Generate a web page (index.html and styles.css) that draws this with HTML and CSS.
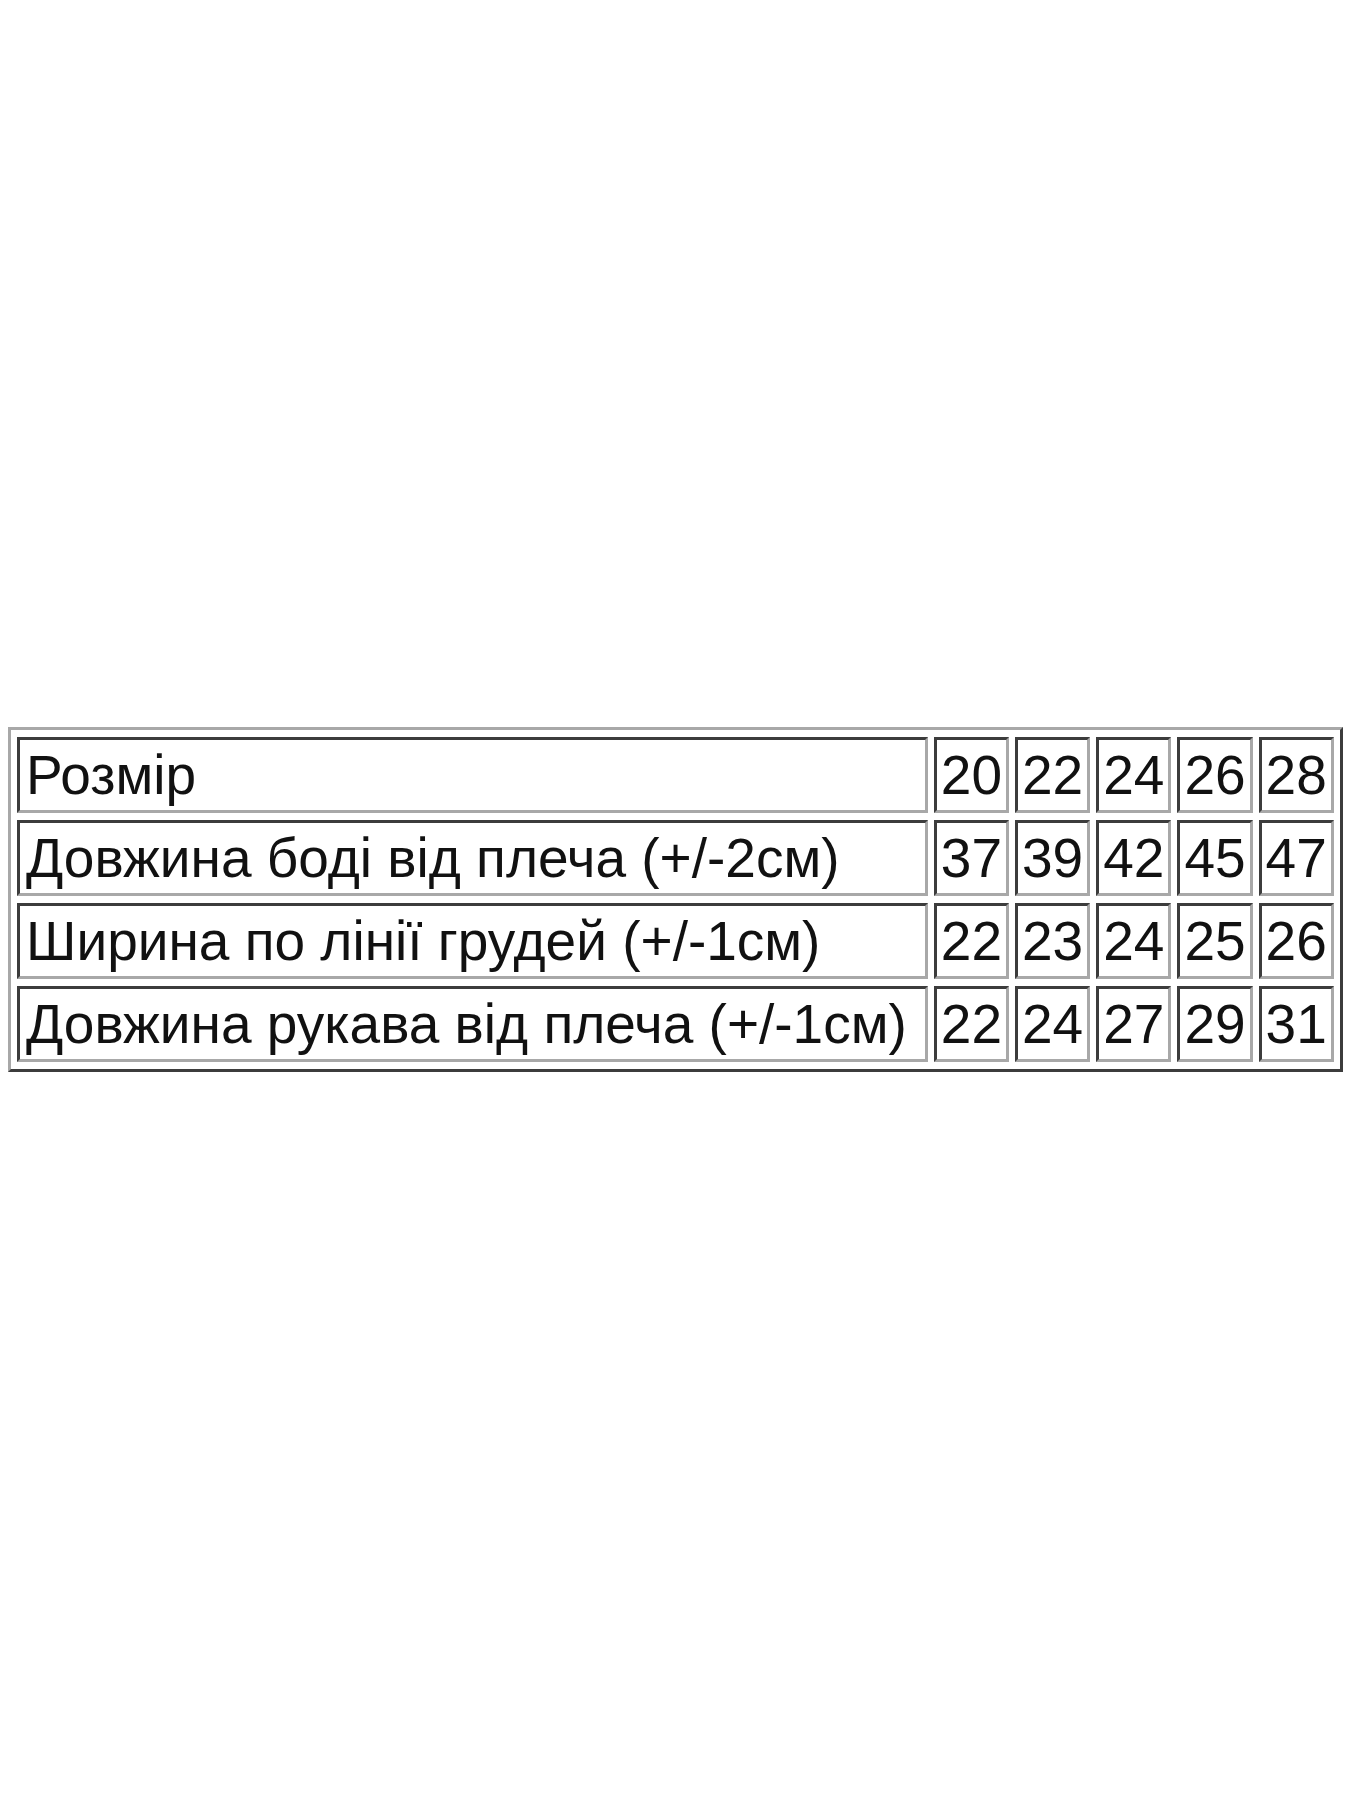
FILE: index.html
```html
<!DOCTYPE html>
<html lang="uk">
<head>
<meta charset="utf-8">
<title>Розмір</title>
<link rel="stylesheet" href="styles.css">
</head>
<body>
<div class="page">
  <table class="sizes">
    <tr><td class="label">Розмір</td><td>20</td><td>22</td><td>24</td><td>26</td><td>28</td></tr>
    <tr><td class="label">Довжина боді від плеча (+/-2см)</td><td>37</td><td>39</td><td>42</td><td>45</td><td>47</td></tr>
    <tr><td class="label">Ширина по лінії грудей (+/-1см)</td><td>22</td><td>23</td><td>24</td><td>25</td><td>26</td></tr>
    <tr><td class="label">Довжина рукава від плеча (+/-1см)</td><td>22</td><td>24</td><td>27</td><td>29</td><td>31</td></tr>
  </table>
</div>
</body>
</html>
```

FILE: styles.css
```css
html, body {
  margin: 0;
  padding: 0;
  background: #fff;
}
.page {
  height: 1800px;
  padding-top: 727px;
  padding-left: 8px;
  box-sizing: border-box;
}
.sizes {
  border-collapse: separate;
  border-spacing: 6px 7px;
  border-style: solid;
  border-width: 3px;
  border-color: #a8a8a8 #3c3c3c #3c3c3c #a8a8a8;
  font-family: "Liberation Sans", Arial, sans-serif;
  font-size: 55px;
  color: #111;
}
.sizes td {
  border-style: solid;
  border-width: 3px;
  border-color: #3c3c3c #a8a8a8 #a8a8a8 #3c3c3c;
  padding: 3px 4px;
  white-space: nowrap;
  line-height: 64px;
}
.sizes td.label {
  padding-left: 6px;
  padding-right: 18px;
}
```
